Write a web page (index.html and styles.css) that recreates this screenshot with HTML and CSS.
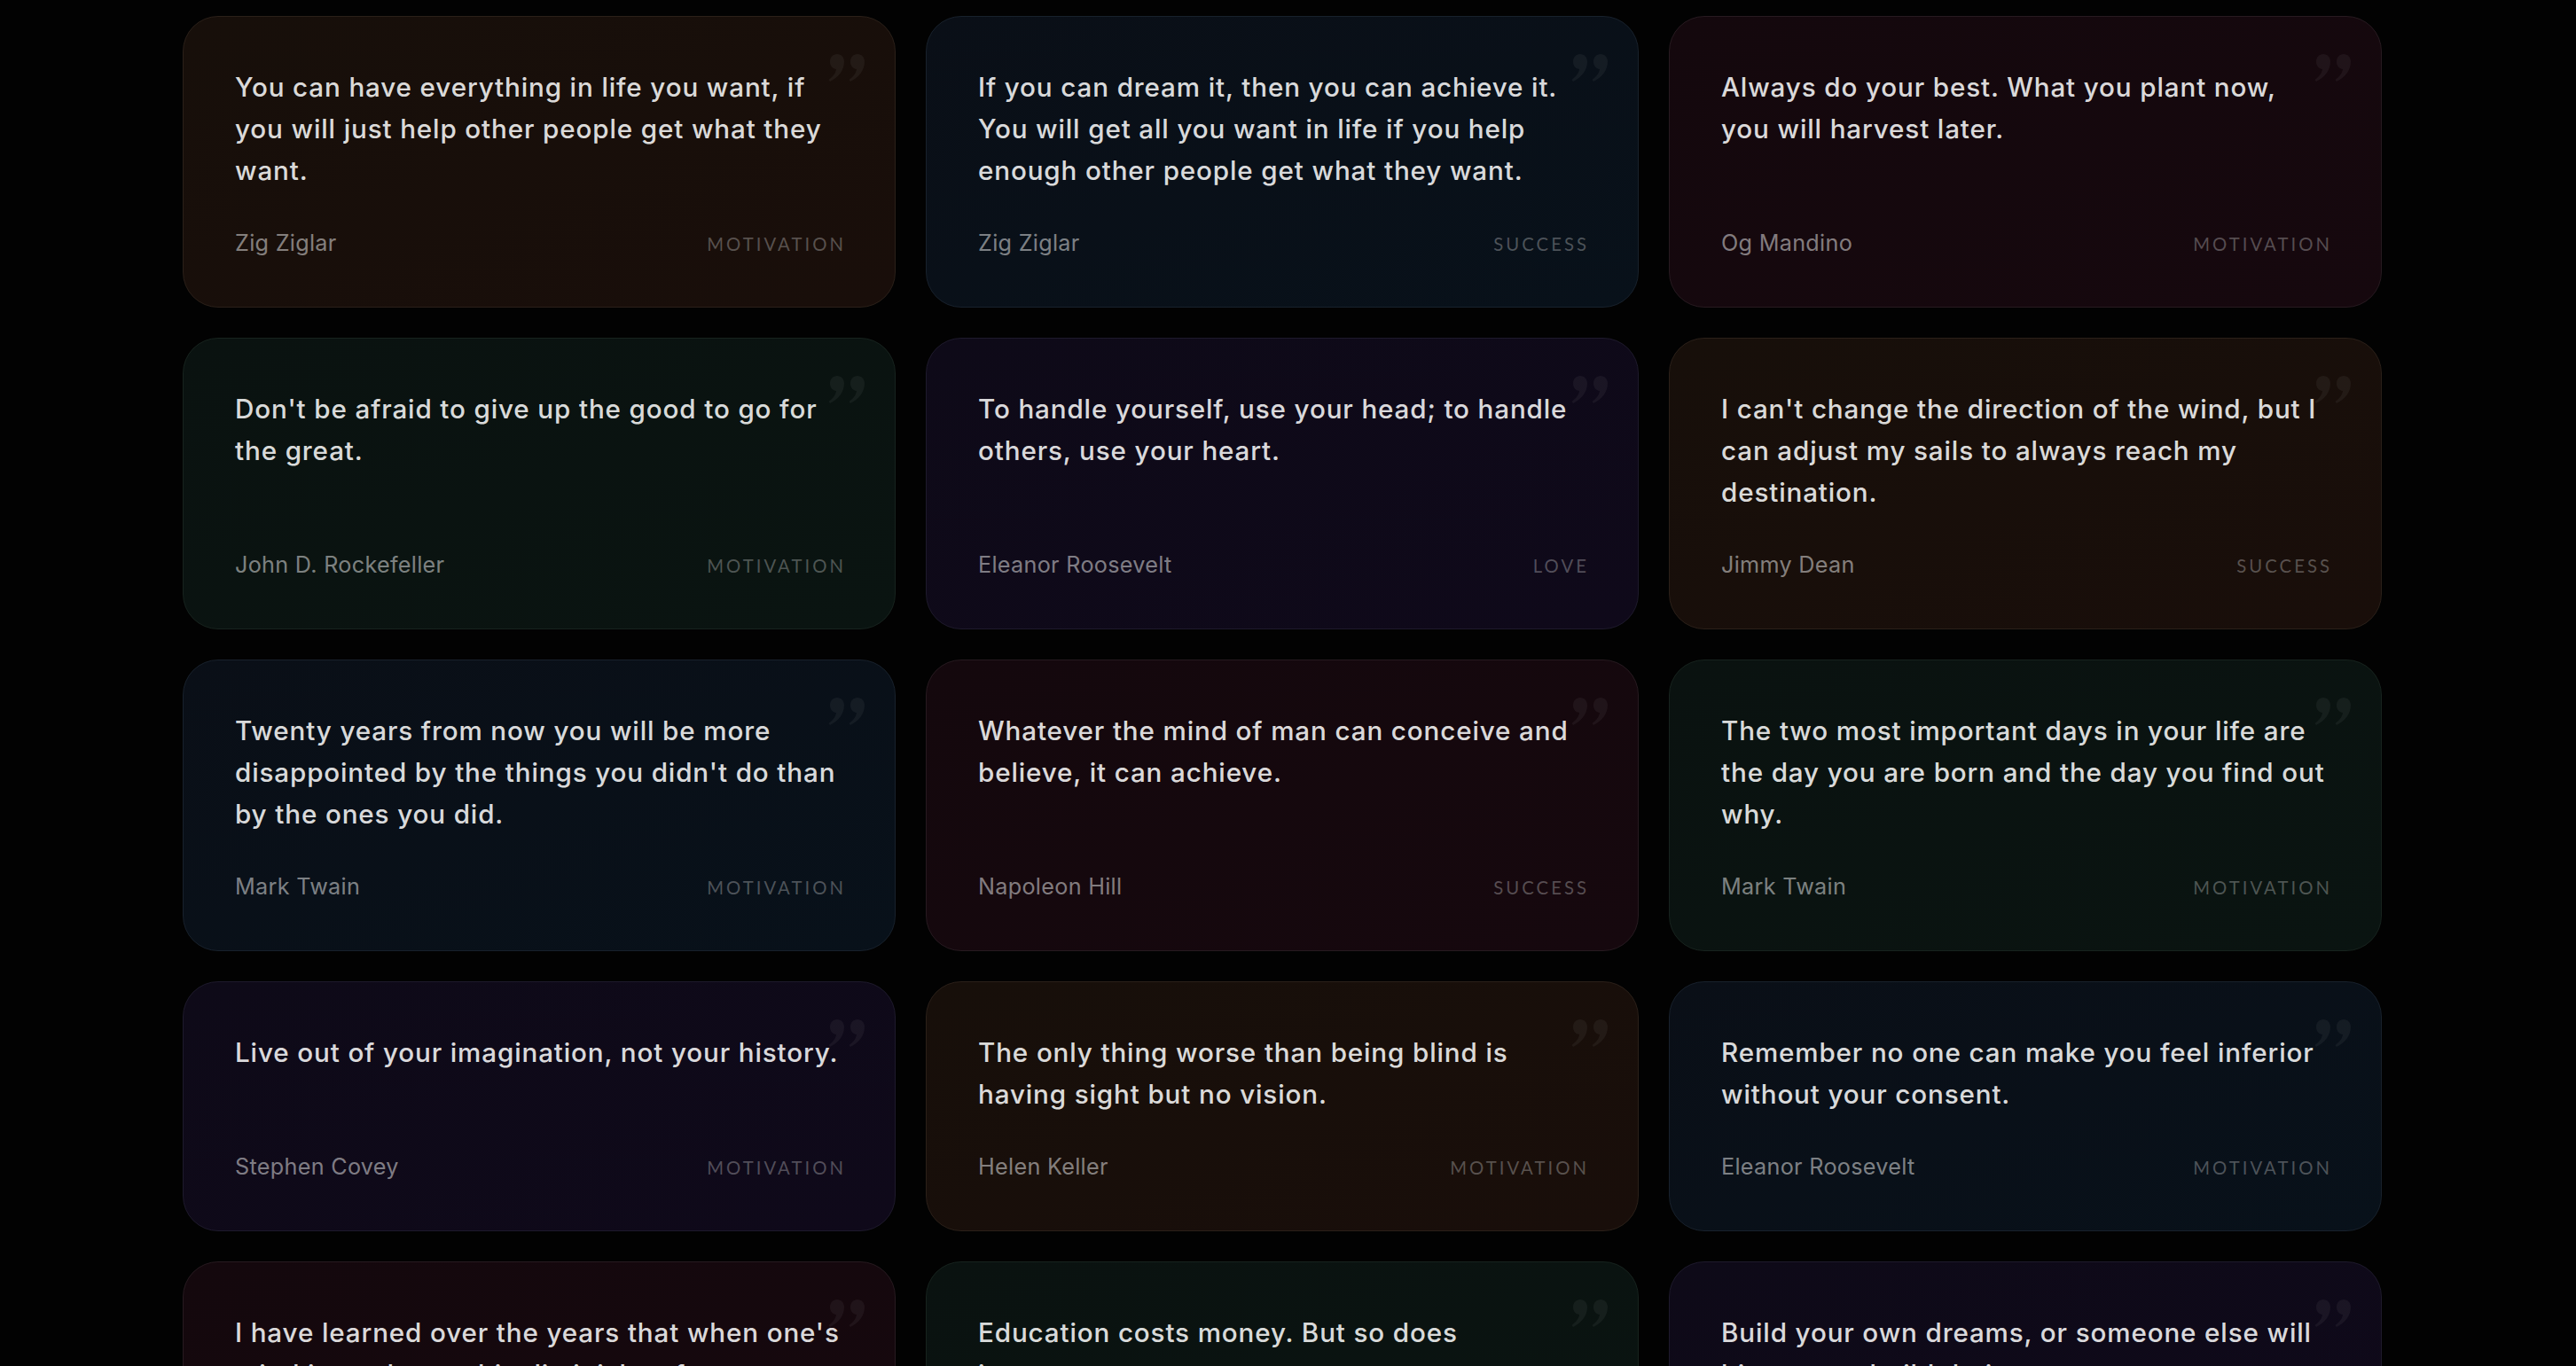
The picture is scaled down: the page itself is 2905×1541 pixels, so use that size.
FILE: index.html
```html
<!DOCTYPE html>
<html lang="en">
<head>
<meta charset="utf-8">
<title>Quotes</title>
<link rel="stylesheet" href="styles.css">
</head>
<body>
<main class="grid">
  <article class="card amber">
    <svg class="mark" viewBox="0 0 43 32" aria-hidden="true"><path d="M12 1C16.5 1 20 4.5 20 9.5C20 19 14 27 4 32L2.5 30C8 26 10.5 22 11 18C6.5 17.5 4 14 4 9.5C4 4.5 7.5 1 12 1Z"/><path d="M35 1C39.5 1 43 4.5 43 9.5C43 19 37 27 27 32L25.5 30C31 26 33.5 22 34 18C29.5 17.5 27 14 27 9.5C27 4.5 30.5 1 35 1Z"/></svg>
    <p class="quote">You can have everything in life you want, if you will just help other people get what they want.</p>
    <footer class="meta"><span class="author">Zig Ziglar</span><span class="tag">Motivation</span></footer>
  </article>
  <article class="card blue">
    <svg class="mark" viewBox="0 0 43 32" aria-hidden="true"><path d="M12 1C16.5 1 20 4.5 20 9.5C20 19 14 27 4 32L2.5 30C8 26 10.5 22 11 18C6.5 17.5 4 14 4 9.5C4 4.5 7.5 1 12 1Z"/><path d="M35 1C39.5 1 43 4.5 43 9.5C43 19 37 27 27 32L25.5 30C31 26 33.5 22 34 18C29.5 17.5 27 14 27 9.5C27 4.5 30.5 1 35 1Z"/></svg>
    <p class="quote">If you can dream it, then you can achieve it. You will get all you want in life if you help enough other people get what they want.</p>
    <footer class="meta"><span class="author">Zig Ziglar</span><span class="tag">Success</span></footer>
  </article>
  <article class="card rose">
    <svg class="mark" viewBox="0 0 43 32" aria-hidden="true"><path d="M12 1C16.5 1 20 4.5 20 9.5C20 19 14 27 4 32L2.5 30C8 26 10.5 22 11 18C6.5 17.5 4 14 4 9.5C4 4.5 7.5 1 12 1Z"/><path d="M35 1C39.5 1 43 4.5 43 9.5C43 19 37 27 27 32L25.5 30C31 26 33.5 22 34 18C29.5 17.5 27 14 27 9.5C27 4.5 30.5 1 35 1Z"/></svg>
    <p class="quote">Always do your best. What you plant now, you will harvest later.</p>
    <footer class="meta"><span class="author">Og Mandino</span><span class="tag">Motivation</span></footer>
  </article>
  <article class="card green">
    <svg class="mark" viewBox="0 0 43 32" aria-hidden="true"><path d="M12 1C16.5 1 20 4.5 20 9.5C20 19 14 27 4 32L2.5 30C8 26 10.5 22 11 18C6.5 17.5 4 14 4 9.5C4 4.5 7.5 1 12 1Z"/><path d="M35 1C39.5 1 43 4.5 43 9.5C43 19 37 27 27 32L25.5 30C31 26 33.5 22 34 18C29.5 17.5 27 14 27 9.5C27 4.5 30.5 1 35 1Z"/></svg>
    <p class="quote">Don't be afraid to give up the good to go for the great.</p>
    <footer class="meta"><span class="author">John D. Rockefeller</span><span class="tag">Motivation</span></footer>
  </article>
  <article class="card purple">
    <svg class="mark" viewBox="0 0 43 32" aria-hidden="true"><path d="M12 1C16.5 1 20 4.5 20 9.5C20 19 14 27 4 32L2.5 30C8 26 10.5 22 11 18C6.5 17.5 4 14 4 9.5C4 4.5 7.5 1 12 1Z"/><path d="M35 1C39.5 1 43 4.5 43 9.5C43 19 37 27 27 32L25.5 30C31 26 33.5 22 34 18C29.5 17.5 27 14 27 9.5C27 4.5 30.5 1 35 1Z"/></svg>
    <p class="quote">To handle yourself, use your head; to handle others, use your heart.</p>
    <footer class="meta"><span class="author">Eleanor Roosevelt</span><span class="tag">Love</span></footer>
  </article>
  <article class="card amber">
    <svg class="mark" viewBox="0 0 43 32" aria-hidden="true"><path d="M12 1C16.5 1 20 4.5 20 9.5C20 19 14 27 4 32L2.5 30C8 26 10.5 22 11 18C6.5 17.5 4 14 4 9.5C4 4.5 7.5 1 12 1Z"/><path d="M35 1C39.5 1 43 4.5 43 9.5C43 19 37 27 27 32L25.5 30C31 26 33.5 22 34 18C29.5 17.5 27 14 27 9.5C27 4.5 30.5 1 35 1Z"/></svg>
    <p class="quote">I can't change the direction of the wind, but I can adjust my sails to always reach my destination.</p>
    <footer class="meta"><span class="author">Jimmy Dean</span><span class="tag">Success</span></footer>
  </article>
  <article class="card blue">
    <svg class="mark" viewBox="0 0 43 32" aria-hidden="true"><path d="M12 1C16.5 1 20 4.5 20 9.5C20 19 14 27 4 32L2.5 30C8 26 10.5 22 11 18C6.5 17.5 4 14 4 9.5C4 4.5 7.5 1 12 1Z"/><path d="M35 1C39.5 1 43 4.5 43 9.5C43 19 37 27 27 32L25.5 30C31 26 33.5 22 34 18C29.5 17.5 27 14 27 9.5C27 4.5 30.5 1 35 1Z"/></svg>
    <p class="quote">Twenty years from now you will be more disappointed by the things you didn't do than by the ones you did.</p>
    <footer class="meta"><span class="author">Mark Twain</span><span class="tag">Motivation</span></footer>
  </article>
  <article class="card rose">
    <svg class="mark" viewBox="0 0 43 32" aria-hidden="true"><path d="M12 1C16.5 1 20 4.5 20 9.5C20 19 14 27 4 32L2.5 30C8 26 10.5 22 11 18C6.5 17.5 4 14 4 9.5C4 4.5 7.5 1 12 1Z"/><path d="M35 1C39.5 1 43 4.5 43 9.5C43 19 37 27 27 32L25.5 30C31 26 33.5 22 34 18C29.5 17.5 27 14 27 9.5C27 4.5 30.5 1 35 1Z"/></svg>
    <p class="quote">Whatever the mind of man can conceive and believe, it can achieve.</p>
    <footer class="meta"><span class="author">Napoleon Hill</span><span class="tag">Success</span></footer>
  </article>
  <article class="card green">
    <svg class="mark" viewBox="0 0 43 32" aria-hidden="true"><path d="M12 1C16.5 1 20 4.5 20 9.5C20 19 14 27 4 32L2.5 30C8 26 10.5 22 11 18C6.5 17.5 4 14 4 9.5C4 4.5 7.5 1 12 1Z"/><path d="M35 1C39.5 1 43 4.5 43 9.5C43 19 37 27 27 32L25.5 30C31 26 33.5 22 34 18C29.5 17.5 27 14 27 9.5C27 4.5 30.5 1 35 1Z"/></svg>
    <p class="quote">The two most important days in your life are the day you are born and the day you find out why.</p>
    <footer class="meta"><span class="author">Mark Twain</span><span class="tag">Motivation</span></footer>
  </article>
  <article class="card purple">
    <svg class="mark" viewBox="0 0 43 32" aria-hidden="true"><path d="M12 1C16.5 1 20 4.5 20 9.5C20 19 14 27 4 32L2.5 30C8 26 10.5 22 11 18C6.5 17.5 4 14 4 9.5C4 4.5 7.5 1 12 1Z"/><path d="M35 1C39.5 1 43 4.5 43 9.5C43 19 37 27 27 32L25.5 30C31 26 33.5 22 34 18C29.5 17.5 27 14 27 9.5C27 4.5 30.5 1 35 1Z"/></svg>
    <p class="quote">Live out of your imagination, not your history.</p>
    <footer class="meta"><span class="author">Stephen Covey</span><span class="tag">Motivation</span></footer>
  </article>
  <article class="card amber">
    <svg class="mark" viewBox="0 0 43 32" aria-hidden="true"><path d="M12 1C16.5 1 20 4.5 20 9.5C20 19 14 27 4 32L2.5 30C8 26 10.5 22 11 18C6.5 17.5 4 14 4 9.5C4 4.5 7.5 1 12 1Z"/><path d="M35 1C39.5 1 43 4.5 43 9.5C43 19 37 27 27 32L25.5 30C31 26 33.5 22 34 18C29.5 17.5 27 14 27 9.5C27 4.5 30.5 1 35 1Z"/></svg>
    <p class="quote">The only thing worse than being blind is having sight but no vision.</p>
    <footer class="meta"><span class="author">Helen Keller</span><span class="tag">Motivation</span></footer>
  </article>
  <article class="card blue">
    <svg class="mark" viewBox="0 0 43 32" aria-hidden="true"><path d="M12 1C16.5 1 20 4.5 20 9.5C20 19 14 27 4 32L2.5 30C8 26 10.5 22 11 18C6.5 17.5 4 14 4 9.5C4 4.5 7.5 1 12 1Z"/><path d="M35 1C39.5 1 43 4.5 43 9.5C43 19 37 27 27 32L25.5 30C31 26 33.5 22 34 18C29.5 17.5 27 14 27 9.5C27 4.5 30.5 1 35 1Z"/></svg>
    <p class="quote">Remember no one can make you feel inferior without your consent.</p>
    <footer class="meta"><span class="author">Eleanor Roosevelt</span><span class="tag">Motivation</span></footer>
  </article>
  <article class="card rose">
    <svg class="mark" viewBox="0 0 43 32" aria-hidden="true"><path d="M12 1C16.5 1 20 4.5 20 9.5C20 19 14 27 4 32L2.5 30C8 26 10.5 22 11 18C6.5 17.5 4 14 4 9.5C4 4.5 7.5 1 12 1Z"/><path d="M35 1C39.5 1 43 4.5 43 9.5C43 19 37 27 27 32L25.5 30C31 26 33.5 22 34 18C29.5 17.5 27 14 27 9.5C27 4.5 30.5 1 35 1Z"/></svg>
    <p class="quote">I have learned over the years that when one's mind is made up, this diminishes fear.</p>
    <footer class="meta"><span class="author">Rosa Parks</span><span class="tag">Motivation</span></footer>
  </article>
  <article class="card green">
    <svg class="mark" viewBox="0 0 43 32" aria-hidden="true"><path d="M12 1C16.5 1 20 4.5 20 9.5C20 19 14 27 4 32L2.5 30C8 26 10.5 22 11 18C6.5 17.5 4 14 4 9.5C4 4.5 7.5 1 12 1Z"/><path d="M35 1C39.5 1 43 4.5 43 9.5C43 19 37 27 27 32L25.5 30C31 26 33.5 22 34 18C29.5 17.5 27 14 27 9.5C27 4.5 30.5 1 35 1Z"/></svg>
    <p class="quote">Education costs money. But so does ignorance.</p>
    <footer class="meta"><span class="author">Claus Moser</span><span class="tag">Success</span></footer>
  </article>
  <article class="card purple">
    <svg class="mark" viewBox="0 0 43 32" aria-hidden="true"><path d="M12 1C16.5 1 20 4.5 20 9.5C20 19 14 27 4 32L2.5 30C8 26 10.5 22 11 18C6.5 17.5 4 14 4 9.5C4 4.5 7.5 1 12 1Z"/><path d="M35 1C39.5 1 43 4.5 43 9.5C43 19 37 27 27 32L25.5 30C31 26 33.5 22 34 18C29.5 17.5 27 14 27 9.5C27 4.5 30.5 1 35 1Z"/></svg>
    <p class="quote">Build your own dreams, or someone else will hire you to build theirs.</p>
    <footer class="meta"><span class="author">Farrah Gray</span><span class="tag">Motivation</span></footer>
  </article>
</main>
</body>
</html>
```

FILE: styles.css
```css
html {
  overflow: hidden;
  background: #020202;
}

body {
  margin: 0;
  padding: 18px 0 0 206px;
  background: #020202;
  font-family: Inter, "Liberation Sans", sans-serif;
  color: rgba(255, 255, 255, 0.88);
}

.grid {
  width: 2480px;
  display: grid;
  grid-template-columns: repeat(3, 804px);
  column-gap: 34px;
  row-gap: 34px;
}

.card {
  position: relative;
  display: flex;
  flex-direction: column;
  padding: 56px 58px 55px;
  border: 1px solid;
  border-radius: 40px;
}

.mark {
  position: absolute;
  top: 41px;
  right: 34px;
  width: 43px;
  height: 32px;
  fill: rgba(255, 255, 255, 0.05);
}

.quote {
  margin: 0 0 42px;
  font-size: 29.6px;
  line-height: 47px;
  font-weight: 500;
  letter-spacing: 0.87px;
  color: rgba(255, 255, 255, 0.87);
}

.meta {
  margin-top: auto;
  display: flex;
  align-items: center;
  justify-content: space-between;
}

.author {
  font-size: 25.2px;
  line-height: 33px;
  letter-spacing: 0.3px;
  color: rgba(255, 255, 255, 0.48);
}

.tag {
  margin-right: -3px;
  font-family: Lato, "Liberation Sans", sans-serif;
  font-size: 20.3px;
  line-height: 24px;
  letter-spacing: 0.15em;
  text-transform: uppercase;
  color: rgba(255, 255, 255, 0.28);
}

.amber {
  background: linear-gradient(160deg, #170f0a 0%, #190e0a 100%);
  border-color: #2b2019;
}

.blue {
  background: linear-gradient(160deg, #0a0f17 0%, #08111a 100%);
  border-color: #18212c;
}

.rose {
  background: linear-gradient(160deg, #14080d 0%, #16080e 100%);
  border-color: #271a20;
}

.green {
  background: linear-gradient(160deg, #0a1210 0%, #0a1411 100%);
  border-color: #17231e;
}

.purple {
  background: linear-gradient(160deg, #0e0a18 0%, #0f091a 100%);
  border-color: #1e1a2c;
}
```
